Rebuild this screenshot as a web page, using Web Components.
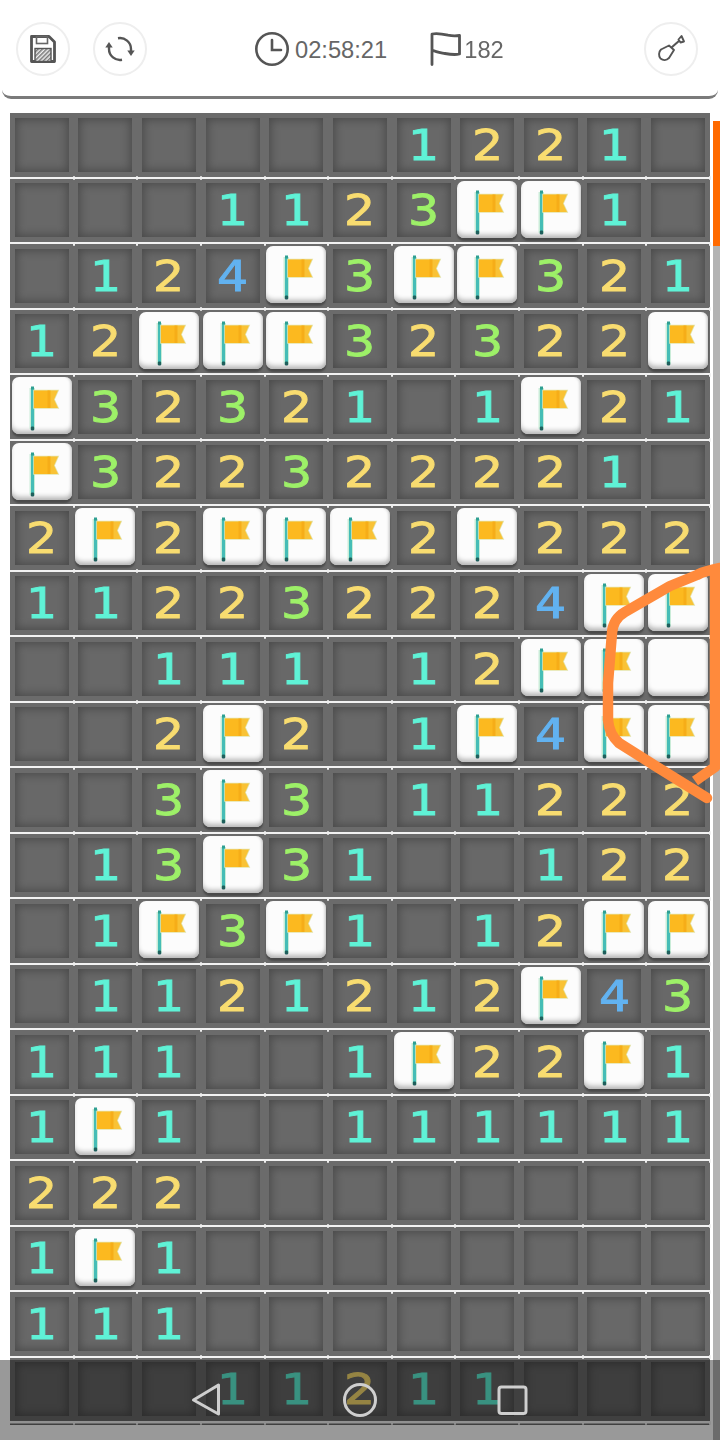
<!DOCTYPE html>
<html><head><meta charset="utf-8">
<style>
html,body{margin:0;padding:0;background:#fff;}
body{width:720px;height:1440px;overflow:hidden;font-family:"Liberation Sans",sans-serif;}
</style></head>
<body>
<game-app></game-app>
<script>
const FLAG=`<svg width="60" height="57" viewBox="0 0 60 57"><rect x="17.500" y="11" width="5.500" height="41" fill="#c9ecd8"/><rect x="19" y="10" width="3" height="42" fill="#45bdb6"/><rect x="19" y="9.500" width="3" height="3" fill="#2f9f92"/><rect x="18.800" y="49.500" width="3.400" height="4" rx="1.200" fill="#1f5f5c"/><path d="M22 13.500H46L42 22.500L46 31H22Z" fill="none" stroke="#e3e3a8" stroke-width="1.600"/><path d="M22 13.500H37V31H22Z" fill="#fcb91f"/><path d="M37 13.500H46L42 22.500L46 31H37Z" fill="#f9c235"/><rect x="35.500" y="13.500" width="3" height="17.500" fill="#f6ad18"/></svg>`;
class GameCell extends HTMLElement{
  constructor(){super();const v=this.getAttribute('v')||'';const s=this.attachShadow({mode:'open'});
  const colors={1:'#5ff2d6',2:'#f8dc70',3:'#9df068',4:'#62b2f0'};
  let inner;
  if(v==='F')inner=`<div class="tile">${FLAG}</div>`;
  else if(v==='W')inner=`<div class="tile"></div>`;
  else inner=`<div class="well" style="color:${colors[v]||'#fff'}"><span>${v}</span></div>`;
  s.innerHTML=`<style>
  :host{display:flex;position:relative;box-sizing:border-box;width:63.636px;height:63.5px;align-items:center;justify-content:center;background:#6b6b6b;}
  .well{box-sizing:border-box;width:54px;height:54px;background:#686868;box-shadow:inset 0 0 9px 2px #4b4b4b;display:flex;align-items:center;justify-content:center;font:400 43px/1 "DejaVu Sans",sans-serif;padding-top:1px;-webkit-text-stroke:.9px currentColor;}
  .well span{display:inline-block;transform:scaleX(1.14);}
  .tile{width:60px;height:57px;margin-top:-2px;background:#fcfcfc;border-radius:7px;box-shadow:inset 0 -5px 5px -2px #b4b4b4,inset -3px 0 3px -2px #c9c9c9,0 3px 2px #4a4a4a;line-height:0;}
  .tick{position:absolute;right:-1px;bottom:-3.500px;width:2px;height:4px;background:#efefef;border-radius:1px;z-index:1;}
  </style>${inner}<span class="tick"></span>`;}
}
customElements.define('game-cell',GameCell);
class IconBtn extends HTMLElement{
  constructor(){super();const s=this.attachShadow({mode:'open'});
  s.innerHTML=`<style>:host{display:flex;align-items:center;justify-content:center;box-sizing:border-box;width:54px;height:54px;border-radius:50%;border:2px solid #eeeeee;background:#fff;}</style><slot></slot>`;}
}
customElements.define('icon-btn',IconBtn);
class TopBar extends HTMLElement{
  constructor(){super();const s=this.attachShadow({mode:'open'});
  s.innerHTML=`<style>
  :host{display:flex;box-sizing:border-box;height:99px;margin:0 2px;padding:21.500px 20px 0 14px;background:#fff;border-bottom:3px solid #7a7a7a;border-radius:0 0 9px 9px;color:#666;font:23.700px "Liberation Sans",sans-serif;filter:blur(.45px);}
  .left{display:flex;gap:23px;height:54px}
  .stat{display:flex;align-items:center;height:58px;margin-top:-1.500px;}
  .stat span{padding-top:2px}
  .time{margin-left:108px;gap:6px}
  .flags{margin-left:43px;gap:3px;}
  .right{margin-left:auto;}
  svg{display:block;overflow:visible}
  </style>
  <div class="left"><icon-btn>
    <svg width="26" height="28" viewBox="0 0 26 28" style="margin-top:1px"><defs><pattern id="h" width="3" height="3" patternUnits="userSpaceOnUse" patternTransform="rotate(45)"><rect width="3" height="3" fill="#eee"/><rect width="1.500" height="3" fill="#777"/></pattern></defs><path d="M1.500 1.500H19L24.500 7V26.500H1.500Z" fill="#fff" stroke="#555" stroke-width="2.800" stroke-linejoin="round"/><rect x="6.500" y="1.500" width="11" height="7" fill="none" stroke="#666" stroke-width="1.600"/><rect x="5" y="13.500" width="16" height="13" fill="url(#h)" stroke="#555" stroke-width="1.400"/></svg>
  </icon-btn><icon-btn>
    <svg width="28" height="28" viewBox="0 0 28 28" fill="none" stroke="#555" stroke-width="2.400"><path d="M12 3.200A11 11 0 0 1 25 14V16"/><path d="M21.300 15.500H28.700L25 21Z" fill="#555" stroke="none"/><path d="M16 24.800A11 11 0 0 1 3 14V12"/><path d="M-.7 12.500H6.700L3 7Z" fill="#555" stroke="none"/></svg>
  </icon-btn></div>
  <div class="stat time"><svg width="34" height="34" viewBox="0 0 34 34" fill="none" stroke="#555" stroke-width="2.600"><circle cx="17" cy="17" r="15.700"/><path d="M17 8V18H26" stroke-linecap="round"/></svg><span>02:58:21</span></div>
  <div class="stat flags"><svg width="31" height="34" viewBox="0 0 31 34" fill="none" stroke="#555" stroke-width="2.800" stroke-linejoin="round" stroke-linecap="round"><path d="M2 32.500V2C7 1 12 1.800 18 3.200C22 4 26 4 29.500 3.500V22C25 23 21 22.600 15 21.500C10 20.500 6 20 2 18"/></svg><span>182</span></div>
  <div class="right"><icon-btn><svg width="30" height="30" viewBox="0 0 30 30" fill="none" stroke="#555" stroke-width="1.900" stroke-linejoin="round"><path d="M13 11.500L5 15.500C2.500 18 2.500 22 4.500 24.500C7 26.500 10.500 26.500 13 24L18 16Z"/><path d="M15.500 13.500L23.500 6.500" stroke-width="2.100"/><path d="M22.500 5.500L25.500 2L28 7.500L24.500 8.500Z"/></svg></icon-btn></div>`;}
}
customElements.define('top-bar',TopBar);
class GameBoard extends HTMLElement{
  constructor(){super();const s=this.attachShadow({mode:'open'});
  const data=[
  "......1221.",
  "...1123FF1.",
  ".124F3FF321",
  "12FFF32322F",
  "F32321.1F21",
  "F322322221.",
  "2F2FFF2F222",
  "112232224FF",
  "..111.12FFW",
  "..2F2.1F4FF",
  "..3F3.11222",
  ".13F31..122",
  ".1F3F1.12FF",
  ".1121212F43",
  "111..1F22F1",
  "1F1..111111",
  "222........",
  "1F1........",
  "111........",
  "...11211..."];
  s.innerHTML=`<style>
  :host{display:block;margin:14px 0 0 10px;width:700px;background:#f2f2f2;filter:blur(.45px);padding-bottom:1.500px;box-shadow:inset 0 -1.500px 0 #6b6b6b;}
  .row{display:flex;height:63.5px;margin-bottom:2px;}
  </style>`+data.map(r=>`<div class="row">`+[...r].map(c=>`<game-cell v="${c==='.'?'':c}"></game-cell>`).join('')+`</div>`).join('');}
}
customElements.define('game-board',GameBoard);
class GameApp extends HTMLElement{
  constructor(){super();const s=this.attachShadow({mode:'open'});
  s.innerHTML=`<style>
  :host{display:block;position:relative;width:720px;height:1440px;overflow:hidden;background:#fff;}
  .track{position:absolute;left:713px;top:121px;bottom:0;width:7px;background:#b3b3b3;}
  .thumb{height:125px;background:#ff6a00;}
  .ink{position:absolute;left:0;top:0;pointer-events:none;}
  .nav{position:absolute;left:0;right:0;bottom:0;height:80px;background:rgba(0,0,0,.4);}
  .nav svg{display:block;position:absolute;left:0;top:0;}
  </style>
  <top-bar></top-bar><game-board></game-board>
  <div class="track"><div class="thumb"></div></div>
  <svg class="ink" width="720" height="1440" fill="none" stroke="#ff8a3c" stroke-width="10.500" stroke-linecap="round" stroke-linejoin="round"><path d="M720 568Q705 571 697 575L670 586L625 612Q613 619 612 633L608 683L608 720Q609 734 619 743L657 767L707 798"/><path d="M715 570V767L695 781" stroke-linecap="butt"/></svg>
  <div class="nav"><svg width="720" height="80" fill="none" stroke="#cfcfcf" stroke-width="3" stroke-linejoin="round"><path d="M193.500 40L218.500 25V54Z"/><circle cx="360" cy="40" r="15.500"/><rect x="499" y="27" width="27" height="26.500" rx="2.500"/></svg></div>`;}
}
customElements.define('game-app',GameApp);
</script>
</body></html>
